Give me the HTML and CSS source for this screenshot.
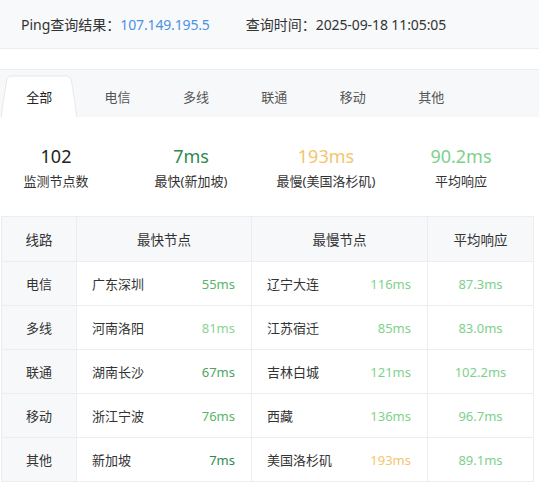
FILE: index.html
```html
<!DOCTYPE html>
<html lang="zh">
<head>
<meta charset="utf-8">
<link rel="stylesheet" href="styles.css">
</head>
<body>
<div class="page">
  <div class="result-bar">
    <span class="label">Ping查询结果：</span><span class="ip">107.149.195.5</span>
    <span class="label time-label">查询时间：</span><span class="time">2025-09-18 11:05:05</span>
  </div>

  <div class="tabs">
    <div class="tab active">
      <svg class="tab-bg" width="78" height="42" viewBox="0 0 78 42"><path d="M1 42 L6.5 6 Q7.2 1 12 1 L66 1 Q70.8 1 71.5 6 L77 42 Z" fill="#fff"/><path d="M1 42 L6.5 6 Q7.2 1 12 1 L66 1 Q70.8 1 71.5 6 L77 42" fill="none" stroke="#e6e8ec" stroke-width="1"/></svg>
      <span class="tab-text">全部</span>
    </div>
    <div class="tab"><span class="tab-text">电信</span></div>
    <div class="tab"><span class="tab-text">多线</span></div>
    <div class="tab"><span class="tab-text">联通</span></div>
    <div class="tab"><span class="tab-text">移动</span></div>
    <div class="tab"><span class="tab-text">其他</span></div>
  </div>

  <div class="stats">
    <div class="stat"><div class="num dark">102</div><div class="cap">监测节点数</div></div>
    <div class="stat"><div class="num fast">7ms</div><div class="cap">最快(新加坡)</div></div>
    <div class="stat"><div class="num slow">193ms</div><div class="cap">最慢(美国洛杉矶)</div></div>
    <div class="stat"><div class="num avg">90.2ms</div><div class="cap">平均响应</div></div>
  </div>

  <div class="table-wrap">
    <table class="grid">
      <colgroup><col class="c1"><col class="c2"><col class="c3"><col class="c4"></colgroup>
      <thead>
        <tr><th>线路</th><th>最快节点</th><th>最慢节点</th><th>平均响应</th></tr>
      </thead>
      <tbody>
        <tr><td class="line">电信</td><td><div class="node"><span>广东深圳</span><span class="g3">55ms</span></div></td><td><div class="node"><span>辽宁大连</span><span class="g5">116ms</span></div></td><td class="avg-cell">87.3ms</td></tr>
        <tr><td class="line">多线</td><td><div class="node"><span>河南洛阳</span><span class="g4">81ms</span></div></td><td><div class="node"><span>江苏宿迁</span><span class="g5">85ms</span></div></td><td class="avg-cell">83.0ms</td></tr>
        <tr><td class="line">联通</td><td><div class="node"><span>湖南长沙</span><span class="g2">67ms</span></div></td><td><div class="node"><span>吉林白城</span><span class="g5">121ms</span></div></td><td class="avg-cell">102.2ms</td></tr>
        <tr><td class="line">移动</td><td><div class="node"><span>浙江宁波</span><span class="g3">76ms</span></div></td><td><div class="node"><span>西藏</span><span class="g5">136ms</span></div></td><td class="avg-cell">96.7ms</td></tr>
        <tr><td class="line">其他</td><td><div class="node"><span>新加坡</span><span class="g1">7ms</span></div></td><td><div class="node"><span>美国洛杉矶</span><span class="orange">193ms</span></div></td><td class="avg-cell">89.1ms</td></tr>
      </tbody>
    </table>
  </div>
</div>
</body>
</html>
```
FILE: styles.css
```css
* { box-sizing: border-box; }
html, body { margin: 0; padding: 0; background: #fff; }
body {
  font-family: "Noto Sans", "Noto Sans CJK SC", sans-serif;
  color: #333;
  font-size: 13px;
}
.page { width: 539px; }

.result-bar {
  height: 49px;
  background: #f8f9fb;
  border-bottom: 1px solid #ebedf0;
  padding-left: 21px;
  display: flex;
  align-items: center;
  font-size: 14px;
  color: #333;
}
.ip { color: #4a93e3; letter-spacing: -0.15px; }
.time-label { margin-left: 36px; }
.time { letter-spacing: -0.1px; }

.tabs {
  margin-top: 20px;
  height: 48px;
  background: #f7f8fa;
  border-top: 1px solid #ebedf0;
  display: flex;
  align-items: flex-end;
}
.tab {
  position: relative;
  width: 78.4px;
  height: 42px;
  display: flex;
  align-items: center;
  justify-content: center;
  font-size: 13px;
  color: #555;
}
.tab.active { color: #222; }
.tab-bg {
  position: absolute;
  left: 0;
  top: 0;
}
.tab-text { position: relative; }

.stats {
  display: flex;
  gap: 35px;
  padding: 27px 0 25px 6px;
}
.stat {
  width: 100px;
  text-align: center;
}
.num {
  font-size: 18px;
  line-height: 24px;
}
.cap {
  font-size: 13px;
  line-height: 20px;
  margin-top: 3px;
  color: #333;
}
.dark { color: #222; }
.fast { color: #2f8a4e; }
.slow { color: #f6c46e; }
.avg { color: #7dd18b; }

.table-wrap { padding-left: 1px; }
.grid {
  width: 532px;
  border-collapse: collapse;
  table-layout: fixed;
  font-size: 13px;
}
.c1 { width: 75px; }
.c2 { width: 175px; }
.c3 { width: 176px; }
.c4 { width: 106px; }
.grid th, .grid td {
  border: 1px solid #ebedf0;
  height: 44px;
  padding: 0;
  font-weight: normal;
  color: #333;
}
.grid th {
  background: #f7f8fa;
  height: 45px;
  text-align: center;
  font-size: 13.5px;
}
.grid td.line {
  background: #f7f8fa;
  text-align: center;
}
.node {
  display: flex;
  justify-content: space-between;
  align-items: center;
  padding: 0 16px 0 15px;
}
.avg-cell {
  text-align: center;
  color: #7dd18b !important;
}
.g1 { color: #2f8a4e; }
.g2 { color: #4da563; }
.g3 { color: #58b46a; }
.g4 { color: #88d495; }
.g5 { color: #80d28c; }
.orange { color: #f6c46e; }
```
